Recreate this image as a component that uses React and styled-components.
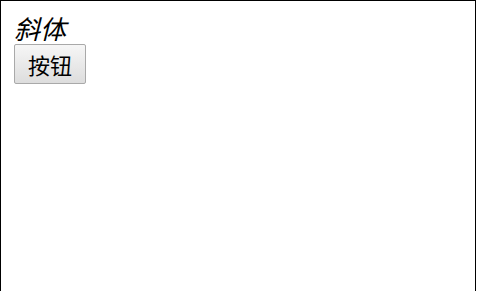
import React from 'react';
import styled, { createGlobalStyle } from 'styled-components';

const GlobalStyle = createGlobalStyle`
  html, body {
    margin: 0;
    padding: 0;
    background: #fff;
    overflow: hidden;
  }
`;

const Frame = styled.div`
  box-sizing: border-box;
  width: 476px;
  height: 291px;
  border: 1px solid #000;
  border-bottom: none;
  padding: 10px 13px;
  font-family: "Noto Sans CJK SC", "Noto Sans", sans-serif;
  font-size: 26px;
  color: #000;
`;

const Italic = styled.div`
  font-style: italic;
  line-height: 33px;
`;

const Button = styled.button`
  display: block;
  font-family: "Noto Sans CJK SC", "Noto Sans", sans-serif;
  font-size: 22px;
  height: 40px;
  padding: 0 13px;
  margin: 0;
  color: #000;
  background: linear-gradient(#f6f6f6, #dddddd);
  border: 1px solid #a9a9a9;
  border-radius: 2px;
`;

export default function App() {
  return (
    <>
      <GlobalStyle />
      <Frame>
        <Italic>斜体</Italic>
        <Button>按钮</Button>
      </Frame>
    </>
  );
}
